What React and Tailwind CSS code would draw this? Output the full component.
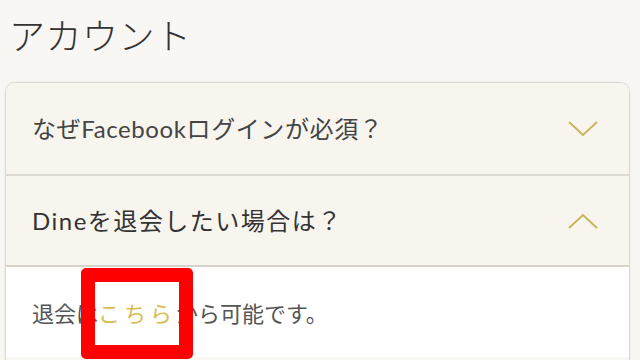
const font = { fontFamily: '"Lato", "Noto Sans CJK JP", sans-serif' }

function Chevron({ up }) {
  return (
    <svg width="30" height="16" viewBox="0 0 30 16" className="shrink-0">
      <polyline
        points={up ? "1,15 15,2 29,15" : "1,1 15,14 29,1"}
        fill="none"
        stroke="#c9b55c"
        strokeWidth="2"
      />
    </svg>
  )
}

export default function App() {
  return (
    <div
      className="relative w-[640px] h-[360px] overflow-hidden bg-[#f9f7f3] text-[#3a3a3a]"
      style={font}
    >
      <h1 className="pl-[9px] pt-[14px] text-[36px] leading-[44px] tracking-[0.5px] font-light text-[#333]">
        アカウント
      </h1>

      <div className="mt-[24px] ml-[5px] w-[625px] h-[290px] rounded-[10px] border border-[#dcd8d1] overflow-hidden shadow-[0_0_3px_rgba(0,0,0,0.06)]">
        <div className="flex h-[93px] items-center justify-between border-b-2 border-[#dedad3] bg-[#f8f5ef] pl-[26px] pr-[31px]">
          <span className="text-[24px] tracking-[0.6px] text-[#444]">なぜFacebookログインが必須？</span>
          <Chevron />
        </div>
        <div className="flex h-[91px] items-center justify-between border-b-2 border-[#d6d3cd] bg-[#f8f5ef] pl-[26px] pr-[31px]">
          <span className="text-[24px] tracking-[1.5px] text-[#333]">Dineを退会したい場合は？</span>
          <Chevron up />
        </div>
        <div className="flex h-[90px] items-center bg-white pl-[26px] pt-[3px]">
          <span className="text-[22px] text-[#555]">
            退会は<span className="tracking-[4px] text-[#d8bd55]">こちら</span>から可能です。
          </span>
        </div>
      </div>

      <div className="absolute left-[81px] top-[268px] w-[112px] h-[91px] rounded-[5px] border-[14px] border-[#ff0000]" />
    </div>
  )
}
